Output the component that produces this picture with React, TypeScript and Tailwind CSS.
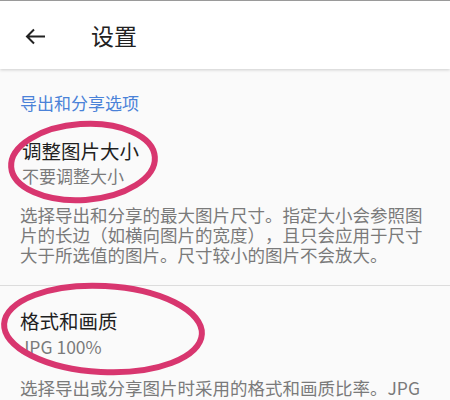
export default function App() {
  return (
    <div
      className="relative w-[450px] h-[400px] overflow-hidden bg-[#fafafa] border-t border-[#9a9a9a] [text-spacing-trim:space-all]"
      style={{ fontFamily: '"Noto Sans CJK SC", Roboto, "Noto Sans", sans-serif' }}
    >
      <header className="h-[68px] bg-white flex items-center shadow-[0_1px_3px_rgba(0,0,0,0.18)]">
        <svg width="21" height="17" viewBox="0 0 21 17" className="ml-[25px] mt-[2px]" fill="none">
          <path d="M20 8.5H2.5M9 1.5L2 8.5l7 7" stroke="#222" strokeWidth="2" />
        </svg>
        <h1 className="ml-[45px] text-[23px] leading-[30px] text-[#222] font-normal">设置</h1>
      </header>

      <div className="px-5">
        <div className="mt-[24px] text-[17px] leading-[20px] text-[#4a82d8]">导出和分享选项</div>

        <div className="mt-[26px] pl-[2px] text-[19.5px] leading-[24px] text-[#1f1f1f]">调整图片大小</div>
        <div className="mt-[2px] pl-[2px] text-[17px] leading-[22px] text-[#7a7a7a]">不要调整大小</div>
        <p className="mt-[18px] text-[17.5px] leading-[20px] text-[#7a7a7a] pb-[20px]">
          选择导出和分享的最大图片尺寸。指定大小会参照图片的长边（如横向图片的宽度），且只会应用于尺寸大于所选值的图片。尺寸较小的图片不会放大。
        </p>
      </div>

      <div className="h-px bg-[#dcdcdc]" />

      <div className="px-5">
        <div className="mt-[23px] text-[19.5px] leading-[24px] text-[#1f1f1f]">格式和画质</div>
        <div className="mt-[3px] text-[17.5px] leading-[22px] text-[#7a7a7a]">JPG 100%</div>
        <p className="mt-[20px] text-[17.5px] leading-[20px] text-[#7a7a7a]">
          选择导出或分享图片时采用的格式和画质比率。JPG
        </p>
      </div>

      <svg className="pointer-events-none absolute inset-0" width="450" height="400">
        <ellipse cx="83" cy="161" rx="72" ry="38" fill="none" stroke="#d8366f" strokeWidth="6" transform="rotate(-4 83 161)" />
        <ellipse cx="103" cy="328" rx="99" ry="43" fill="none" stroke="#d8366f" strokeWidth="6" transform="rotate(3 103 328)" />
      </svg>
    </div>
  )
}
